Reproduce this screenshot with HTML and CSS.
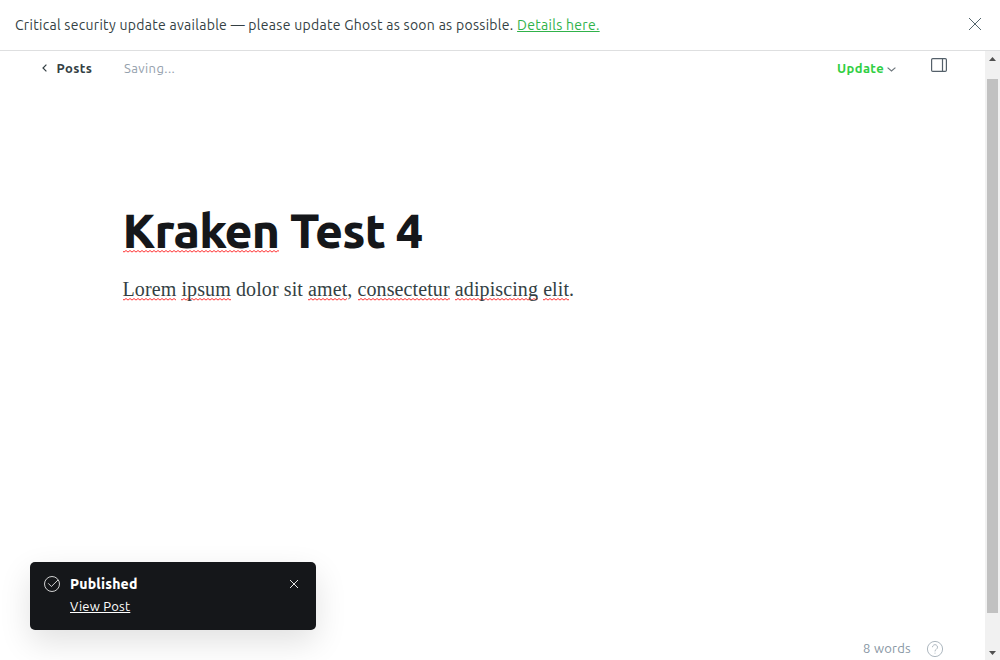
FILE: index.html
```html
<!DOCTYPE html>
<html lang="en">
<head>
<meta charset="utf-8">
<title>Kraken Test 4</title>
<link rel="stylesheet" href="styles.css">
</head>
<body>
<div class="app">
  <header class="alert">
    <p class="alert-text"><span class="alert-message">Critical security update available — please update Ghost as soon as possible.</span> <a class="alert-link" href="#">Details here.</a></p>
    <svg class="alert-close" viewBox="0 0 12 12"><path d="M0 0L12 12M12 0L0 12"/></svg>
  </header>
  <div class="viewport">
    <main class="editor">
      <nav class="toolbar">
        <svg class="back-icon" viewBox="0 0 5 8"><path d="M4.400.6L1 4l3.400 3.400"/></svg>
        <a class="back">Posts</a>
        <span class="status">Saving...</span>
        <a class="update">Update</a>
        <svg class="update-icon" viewBox="0 0 9 5"><path d="M.6.6L4.500 4 8.400.6"/></svg>
        <svg class="panel-icon" viewBox="0 0 16 14"><rect x=".6" y=".6" width="14.800" height="12.800" rx="1.200"/><path d="M11.500 .6v12.800"/></svg>
      </nav>
      <article class="post">
        <h1 class="title"><span class="misspelt">Kraken</span> Test 4</h1>
        <p class="body"><span class="misspelt">Lorem</span> <span class="misspelt">ipsum</span> dolor sit <span class="misspelt">amet</span>, <span class="misspelt">consectetur</span> <span class="misspelt">adipiscing</span> <span class="misspelt">elit</span>.</p>
      </article>
      <footer class="footer">
        <span class="words">8 words</span>
        <svg class="help-icon" viewBox="0 0 16 16"><circle cx="8" cy="8" r="7.600"/><path d="M5.500 6.200a2.500 2.500 0 1 1 3.800 2.100C8.400 8.900 8 9.300 8 10.400"/><path d="M8 11.700v.9"/></svg>
      </footer>
    </main>
    <div class="scrollbar">
      <svg class="arrow" viewBox="0 0 7 4"><path d="M0 4L3.500 0 7 4z"/></svg>
      <div class="thumb"></div>
      <svg class="arrow" viewBox="0 0 7 4"><path d="M0 0L3.500 4 7 0z"/></svg>
    </div>
  </div>
  <aside class="toast">
    <svg class="check-icon" viewBox="0 0 16 16"><circle cx="8" cy="8" r="7.500"/><path d="M4.200 7.300l3.200 3.200 6.600-6.500"/></svg>
    <div class="toast-content">
      <strong class="toast-title">Published</strong>
      <a class="toast-link" href="#">View Post</a>
    </div>
    <svg class="toast-close" viewBox="0 0 8 8"><path d="M0 0L8 8M8 0L0 8"/></svg>
  </aside>
</div>
</body>
</html>
```
FILE: styles.css
```css
* { box-sizing: border-box; }
body { margin: 0; font-family: Ubuntu, "Noto Sans", "Open Sans", sans-serif; color: #343f44; background: #fff; }
svg { display: block; flex: none; fill: none; overflow: visible; }
h1, p { margin: 0; }
.app { height: 660px; display: flex; flex-direction: column; position: relative; overflow: hidden; }
.alert { height: 51px; flex: none; display: flex; align-items: center; justify-content: space-between; padding: 0 19px 2px 15px; border-bottom: 1px solid #dedfe0; }
.alert-text { padding-top: 2px; font-size: 14px; line-height: 20px; letter-spacing: .29px; white-space: nowrap; }
.alert-link { color: #30b24a; }
.alert-close { width: 12px; height: 12px; stroke: #54666d; }
.viewport { flex: 1; display: flex; min-height: 0; }
.editor { flex: 1; display: flex; flex-direction: column; }
.toolbar { height: 33px; display: flex; align-items: center; padding: 0 38px 0 42px; font-size: 13px; line-height: 18px; letter-spacing: .4px; white-space: nowrap; }
.back-icon { width: 5px; height: 8px; margin-top: 1px; stroke: #343f44; stroke-width: 1.2; }
.back { margin-left: 9.5px; width: 36px; font-weight: 600; }
.status { margin-left: 31.5px; color: #95a1ad; }
.update { margin-left: auto; width: 47.5px; color: #30cf43; font-weight: 600; }
.update-icon { margin: 3px 0 0 2.5px; width: 9px; height: 5px; stroke: #6e777d; stroke-width: 1.2; }
.panel-icon { margin: -6px 0 0 35px; width: 16px; height: 14px; stroke: #54606a; stroke-width: 1.2; }
.post { flex: 1; padding: 118px 0 0 122.5px; white-space: nowrap; }
.title { font-size: 48px; line-height: 56px; font-weight: 800; letter-spacing: -.8px; color: #15171a; }
.body { margin-top: 15px; font: 20px/32px "Liberation Serif", serif; letter-spacing: .1px; color: #343f44; }
.misspelt { padding-bottom: 1px; background: url("data:image/svg+xml,%3Csvg xmlns='http://www.w3.org/2000/svg' width='4' height='3'%3E%3Cpath d='M-1 .5L1 2.100 3 .5 5 2.100' fill='none' stroke='%23f33'/%3E%3C/svg%3E") repeat-x left bottom; }
.title .misspelt { background-position: left bottom 5px; }
.footer { height: 24px; display: flex; align-items: center; justify-content: flex-end; padding-right: 42px; font-size: 13px; line-height: 18px; letter-spacing: .25px; color: #8796a3; }
.help-icon { margin: 2px 0 0 16px; width: 16px; height: 16px; stroke: #a4afb8; stroke-width: .9; }
.scrollbar { width: 15px; background: #f1f1f1; display: flex; flex-direction: column; align-items: center; padding: 6px 0 5px; }
.arrow { width: 7px; height: 4px; fill: #505050; }
.thumb { width: 11px; height: 534px; margin: 18px 0 auto; background: #c1c1c1; }
.toast { position: absolute; left: 30px; top: 562px; width: 286px; height: 68px; display: flex; align-items: flex-start; padding: 12px 18px 0 14px; border-radius: 5px; background: #15171a; color: #fff; box-shadow: 0 12px 32px rgba(0, 0, 0, .12); }
.check-icon { width: 16px; height: 16px; margin-top: 2px; stroke: #e5e5e5; stroke-width: .9; }
.toast-content { flex: 1; display: flex; flex-direction: column; align-items: flex-start; margin-left: 10px; white-space: nowrap; }
.toast-title { font-size: 14px; line-height: 20px; font-weight: 800; letter-spacing: .2px; }
.toast-link { margin-top: 2px; font-size: 13px; line-height: 20px; letter-spacing: .25px; color: #fff; }
.toast-close { width: 8px; height: 8px; margin-top: 6px; stroke: #e5e5e5; }
```
